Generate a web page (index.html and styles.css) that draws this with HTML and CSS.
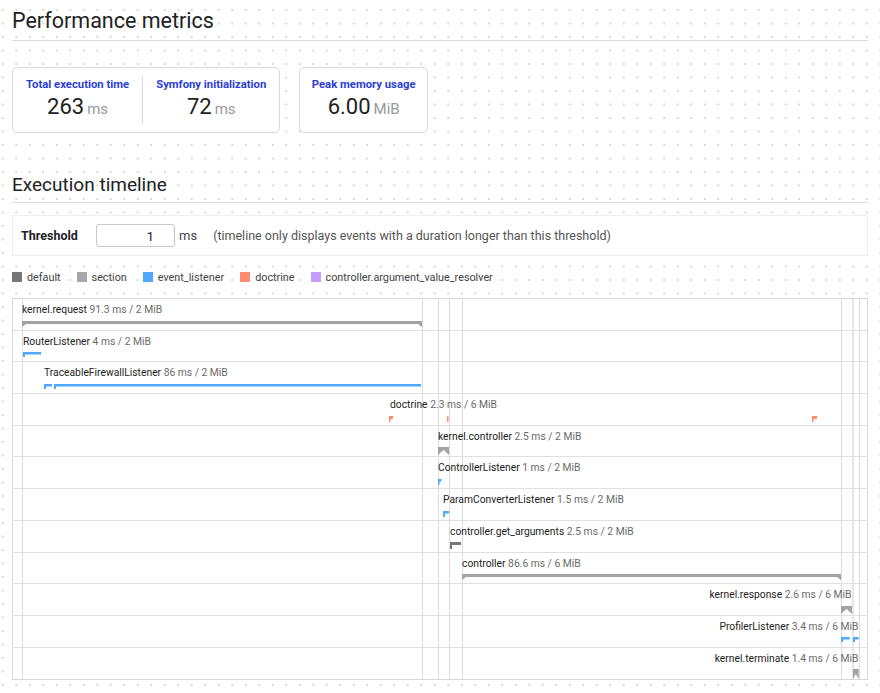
FILE: index.html
```html
<!DOCTYPE html>
<html lang="en">
<head>
<meta charset="utf-8">
<title>Performance metrics</title>
<link rel="stylesheet" href="styles.css">
</head>
<body>
<h2 class="page-title">Performance metrics</h2>

<div class="metrics">
  <div class="metric-group">
    <div class="metric">
      <span class="metric-label">Total execution time</span>
      <span class="metric-value">263<span class="unit">ms</span></span>
    </div>
    <div class="metric-divider"></div>
    <div class="metric">
      <span class="metric-label">Symfony initialization</span>
      <span class="metric-value">72<span class="unit">ms</span></span>
    </div>
  </div>
  <div class="metric-group">
    <div class="metric metric-single">
      <span class="metric-label">Peak memory usage</span>
      <span class="metric-value">6.00<span class="unit">MiB</span></span>
    </div>
  </div>
</div>

<h3 class="section-title">Execution timeline</h3>

<form class="threshold">
  <label class="threshold-label" for="threshold">Threshold</label>
  <input class="threshold-input" id="threshold" type="text" value="1">
  <span class="threshold-unit">ms</span>
  <span class="threshold-help">(timeline only displays events with a duration longer than this threshold)</span>
</form>

<div class="legend">
  <span class="legend-item"><i class="swatch c-default"></i>default</span>
  <span class="legend-item"><i class="swatch c-section"></i>section</span>
  <span class="legend-item"><i class="swatch c-listener"></i>event_listener</span>
  <span class="legend-item"><i class="swatch c-doctrine"></i>doctrine</span>
  <span class="legend-item"><i class="swatch c-resolver"></i>controller.argument_value_resolver</span>
</div>

<div class="timeline">
  <div class="vlines">
    <span class="vl" style="left:8.7px"></span>
    <span class="vl" style="left:408.5px"></span>
    <span class="vl" style="left:425.3px"></span>
    <span class="vl" style="left:436px"></span>
    <span class="vl" style="left:448.7px"></span>
    <span class="vl" style="left:827.5px"></span>
    <span class="vl vl-wide" style="left:838.7px"></span>
    <span class="vl" style="left:846.3px"></span>
  </div>

  <div class="row">
    <span class="ev-label" style="left:9px">kernel.request <span class="ev-detail">91.3 ms / 2 MiB</span></span>
    <svg class="bar" style="left:9px" width="400" height="7"><polygon class="f-section" points="0,0 400,0 400,6 396,3 4,3 0,6"/></svg>
  </div>
  <div class="row">
    <span class="ev-label" style="left:10px">RouterListener <span class="ev-detail">4 ms / 2 MiB</span></span>
    <svg class="bar" style="left:10px" width="18" height="6"><polygon class="f-listener" points="0,0 18,0 18,2.5 2,2.5 2,5 0,5"/></svg>
  </div>
  <div class="row">
    <span class="ev-label" style="left:31px">TraceableFirewallListener <span class="ev-detail">86 ms / 2 MiB</span></span>
    <svg class="bar" style="left:31.3px" width="8" height="6"><polygon class="f-listener" points="0,0 8,0 8,2.5 2,2.5 2,5 0,5"/></svg>
    <svg class="bar" style="left:41.3px" width="367" height="6"><polygon class="f-listener" points="0,0 367,0 367,2.5 2,2.5 2,5 0,5"/></svg>
  </div>
  <div class="row">
    <span class="ev-label" style="left:377px">doctrine <span class="ev-detail">2.3 ms / 6 MiB</span></span>
    <svg class="bar" style="left:376.3px" width="4" height="6"><polygon class="f-doctrine" points="0,0 4,0 4,3 1.5,3 1.5,6 0,6"/></svg>
    <svg class="bar" style="left:434.3px" width="2" height="6"><polygon class="f-doctrine" points="0,0 1.5,0 1.5,6 0,6"/></svg>
    <svg class="bar" style="left:798.7px" width="5" height="6"><polygon class="f-doctrine" points="0,0 5,0 5,3 1.5,3 1.5,6 0,6"/></svg>
  </div>
  <div class="row">
    <span class="ev-label" style="left:425px">kernel.controller <span class="ev-detail">2.5 ms / 2 MiB</span></span>
    <svg class="bar" style="left:425.3px" width="11" height="8"><polygon class="f-section" points="0,0 11,0 11,8 5.5,3 0,8"/></svg>
  </div>
  <div class="row">
    <span class="ev-label" style="left:425px">ControllerListener <span class="ev-detail">1 ms / 2 MiB</span></span>
    <svg class="bar" style="left:425.3px" width="4" height="6"><polygon class="f-listener" points="0,0 3.5,0 3.5,2.5 1.5,2.5 1.5,6 0,6"/></svg>
  </div>
  <div class="row">
    <span class="ev-label" style="left:430px">ParamConverterListener <span class="ev-detail">1.5 ms / 2 MiB</span></span>
    <svg class="bar" style="left:430px" width="6" height="6"><polygon class="f-listener" points="0,0 6,0 6,2.5 2,2.5 2,6 0,6"/></svg>
  </div>
  <div class="row">
    <span class="ev-label" style="left:437px">controller.get_arguments <span class="ev-detail">2.5 ms / 2 MiB</span></span>
    <svg class="bar" style="left:437px" width="11" height="7"><polygon class="f-default" points="0,0 11,0 11,3 2,3 2,7 0,7"/></svg>
  </div>
  <div class="row">
    <span class="ev-label" style="left:449px">controller <span class="ev-detail">86.6 ms / 6 MiB</span></span>
    <svg class="bar" style="left:449px" width="379" height="7"><polygon class="f-section" points="0,0 379,0 379,6 375,3 4,3 0,6"/></svg>
  </div>
  <div class="row">
    <span class="ev-label ev-right" style="right:15.5px">kernel.response <span class="ev-detail">2.6 ms / 6 MiB</span></span>
    <svg class="bar" style="left:827.7px" width="11" height="8"><polygon class="f-section" points="0,0 11,0 11,8 5.5,3 0,8"/></svg>
  </div>
  <div class="row">
    <span class="ev-label ev-right" style="right:8.5px">ProfilerListener <span class="ev-detail">3.4 ms / 6 MiB</span></span>
    <svg class="bar" style="left:827.7px" width="9" height="6"><polygon class="f-listener" points="0,0 8.6,0 8.6,2.5 2,2.5 2,5 0,5"/></svg>
    <svg class="bar" style="left:840.3px" width="6" height="6"><polygon class="f-listener" points="0,0 5.7,0 5.7,2.5 2,2.5 2,5 0,5"/></svg>
  </div>
  <div class="row">
    <span class="ev-label ev-right" style="right:8.5px">kernel.terminate <span class="ev-detail">1.4 ms / 6 MiB</span></span>
    <svg class="bar" style="left:840.3px" width="6" height="10"><polygon class="f-section" points="0,0 5.7,0 5.7,10 2.85,5 0,10"/></svg>
  </div>
</div>
</body>
</html>
```

FILE: styles.css
```css
html {
  background-color: #fff;
  background-image: radial-gradient(circle, #d6d6d6 0.75px, rgba(255,255,255,0) 1.05px);
  background-size: 13.5px 13.5px;
  background-position: -4px 3.25px;
}

body {
  margin: 0;
  padding: 0 12px 0 12px;
  font-family: Roboto, "Liberation Sans", sans-serif;
  color: #222;
  width: 856px;
}

.page-title {
  margin: 7px 0 0;
  padding-bottom: 5px;
  font-size: 21.5px;
  line-height: 28px;
  font-weight: 400;
  color: #222;
  border-bottom: 1px solid #dcdcdc;
}

.metrics {
  display: flex;
  gap: 19px;
  margin-top: 26px;
}

.metric-group {
  display: flex;
  background: #fff;
  border: 1px solid #d9d9d9;
  border-radius: 5px;
  padding: 9px 0 8px;
}

.metric {
  display: flex;
  flex-direction: column;
  align-items: center;
  padding: 0 13px;
}

.metric-single {
  padding: 0 11.5px;
}

.metric-label {
  font-size: 11.3px;
  line-height: 15px;
  font-weight: 700;
  color: #2b3ed6;
}

.metric-value {
  font-size: 22px;
  line-height: 29px;
  color: #222;
}

.unit {
  font-size: 15px;
  color: #999;
  margin-left: 3px;
}

.metric-divider {
  width: 1px;
  background: #d9d9d9;
  margin: 0;
}

.section-title {
  margin: 40px 0 0;
  padding-bottom: 5px;
  font-size: 19px;
  line-height: 24px;
  font-weight: 400;
  color: #222;
  border-bottom: 1px solid #dcdcdc;
}

.threshold {
  display: flex;
  align-items: center;
  margin: 12px 0 0;
  height: 41px;
  box-sizing: border-box;
  padding: 0 8px;
  background: #fff;
  border: 1px solid #efefef;
  font-size: 12.5px;
}

.threshold-label {
  font-weight: 700;
  color: #222;
  width: 75px;
}

.threshold-input {
  width: 79px;
  height: 23px;
  box-sizing: border-box;
  border: 1px solid #c8c8c8;
  border-radius: 3px;
  padding: 0 20px 0 4px;
  text-align: right;
  font-family: Roboto, "Liberation Sans", sans-serif;
  font-size: 13.5px;
  color: #222;
  background: #fff;
}

.threshold-unit {
  margin-left: 4px;
  font-size: 13px;
  color: #444;
}

.threshold-help {
  margin-left: 16px;
  color: #555;
}

.legend {
  display: flex;
  align-items: center;
  gap: 16px;
  margin-top: 13px;
  height: 16px;
  font-size: 10.8px;
  color: #444;
}

.legend-item {
  display: flex;
  align-items: center;
}

.swatch {
  display: inline-block;
  width: 10px;
  height: 10px;
  margin-right: 5px;
}

.c-default { background: #777; }
.c-section { background: #a8a8a8; }
.c-listener { background: #4ea8ff; }
.c-doctrine { background: #ff8b70; }
.c-resolver { background: #c59cff; }

.f-default { fill: #777; }
.f-section { fill: #a3a3a3; }
.f-listener { fill: #4ea8ff; }
.f-doctrine { fill: #ff8b70; }

.timeline {
  position: relative;
  margin-top: 13px;
  background: #fff;
  border: 1px solid #d7d7d7;
}

.vlines {
  position: absolute;
  inset: 0;
}

.vl {
  position: absolute;
  top: 0;
  bottom: 0;
  width: 1px;
  background: #dcdcdc;
}

.vl-wide {
  width: 2px;
  background: #e6e6e6;
}

.row {
  position: relative;
  height: 31.7px;
  box-sizing: border-box;
  border-bottom: 1px solid #e0e0e0;
}

.row:last-child {
  border-bottom: none;
}

.ev-label {
  position: absolute;
  top: 4px;
  font-size: 10.3px;
  line-height: 14px;
  color: #222;
  white-space: nowrap;
}

.ev-detail {
  color: #6a6a6a;
}

.bar {
  position: absolute;
  top: 21.5px;
  display: block;
  overflow: visible;
}
```
